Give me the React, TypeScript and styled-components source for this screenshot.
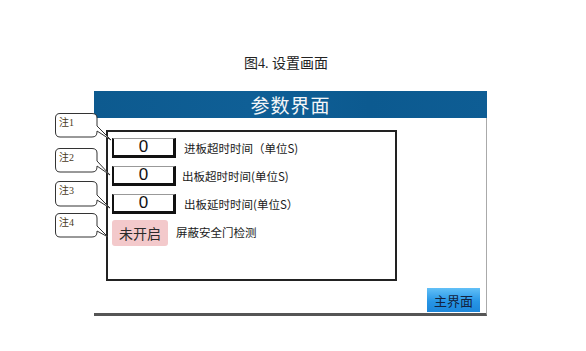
import React from 'react'
import styled, { createGlobalStyle } from 'styled-components'

const GlobalStyle = createGlobalStyle`
  html, body {
    margin: 0;
    padding: 0;
    background: #fff;
  }
  body {
    font-family: "Noto Sans CJK SC", "Noto Sans", sans-serif;
  }
`

const Page = styled.div`
  position: relative;
  width: 586px;
  height: 351px;
  overflow: hidden;
  display: flex;
  flex-direction: column;
`

const Caption = styled.div`
  margin-top: 55px;
  width: 572px;
  text-align: center;
  font-family: "Liberation Serif", "Noto Sans CJK SC", serif;
  font-size: 14px;
  line-height: 17px;
  color: #222;
`

const Screen = styled.div`
  margin: 19px 0 0 94px;
  width: 393px;
  display: flex;
  flex-direction: column;
`

const Header = styled.div`
  height: 27px;
  background: linear-gradient(90deg, #0d5a8f 0%, #0f5f96 40%, #0c5a90 70%, #0e5d94 100%);
  color: #f4f6f8;
  display: flex;
  align-items: center;
  justify-content: center;
  font-size: 19px;
  letter-spacing: 1px;
`

const Body = styled.div`
  height: 195px;
  border-right: 1px solid #aaa;
  border-bottom: 3px solid #555;
  display: flex;
  flex-direction: column;
`

const Panel = styled.div`
  margin: 12px 0 0 12px;
  width: 283px;
  height: 142px;
  border: 2px solid #222;
  display: flex;
  flex-direction: column;
  gap: 7px;
  padding: 5px 0 0 4px;
  box-sizing: content-box;
`

const Row = styled.div`
  display: flex;
  align-items: center;
  gap: ${(p: { $gap: number }) => p.$gap}px;
  height: 21px;
`

const ValueBox = styled.div`
  width: 59px;
  height: 16px;
  border-top: 1px solid #999;
  border-left: 2px solid #111;
  border-right: 3px solid #111;
  border-bottom: 3px solid #111;
  display: flex;
  align-items: center;
  justify-content: center;
  font-family: "Liberation Sans", sans-serif;
  font-size: 17px;
  color: #111;
`

const Label = styled.span`
  font-size: 11.5px;
  color: #1a1a1a;
  white-space: nowrap;
`

const ToggleButton = styled.div`
  width: 56px;
  height: 26px;
  margin-top: 2px;
  background: #f3c9cb;
  border-radius: 3px;
  display: flex;
  align-items: center;
  justify-content: center;
  font-size: 14px;
  color: #2a2a2a;
`

const HomeButton = styled.div`
  margin: auto 6px 1px auto;
  width: 53px;
  height: 24px;
  background: linear-gradient(180deg, #62c0f7 0%, #2796e6 55%, #1c86da 100%);
  display: flex;
  align-items: center;
  justify-content: center;
  font-size: 13px;
  color: #13233f;
`

const CalloutWrap = styled.div<{ $top: number }>`
  position: absolute;
  left: 55px;
  top: ${(p) => p.$top}px;
  width: 43px;
  height: 25px;
`

const CalloutText = styled.span`
  position: absolute;
  left: 4px;
  top: 4px;
  font-family: "Liberation Serif", "Noto Sans CJK SC", serif;
  font-size: 10px;
  line-height: 12px;
  color: #4a3a22;
`

const CalloutSvg = styled.svg`
  position: absolute;
  left: 0;
  top: 0;
  overflow: visible;
`

function Callout({ top, label, tipX, tipY, h = 24 }: { top: number; label: string; tipX: number; tipY: number; h?: number }) {
  const w = 42
  const r = 5
  const d = `M${r} 0.5 H${w - r} Q${w} 0.5 ${w} ${r} V${h - 11} L${tipX} ${tipY} L${w} ${h - 6} V${h - r} Q${w} ${h} ${w - r} ${h} H${r} Q0.5 ${h} 0.5 ${h - r} V${r} Q0.5 0.5 ${r} 0.5 Z`
  return (
    <CalloutWrap $top={top}>
      <CalloutSvg width={60} height={32}>
        <path d={d} fill="#fff" stroke="#333" strokeWidth={1} />
      </CalloutSvg>
      <CalloutText>{label}</CalloutText>
    </CalloutWrap>
  )
}

const rows = [
  { label: '进板超时时间（单位S)', gap: 8 },
  { label: '出板超时时间(单位S)', gap: 6 },
  { label: '出板延时时间(单位S）', gap: 8 },
]

export default function App() {
  return (
    <Page>
      <GlobalStyle />
      <Caption>图4. 设置画面</Caption>
      <Screen>
        <Header>参数界面</Header>
        <Body>
          <Panel>
            {rows.map((r, i) => (
              <Row key={i} $gap={r.gap}>
                <ValueBox>0</ValueBox>
                <Label>{r.label}</Label>
              </Row>
            ))}
            <Row $gap={8}>
              <ToggleButton>未开启</ToggleButton>
              <Label>屏蔽安全门检测</Label>
            </Row>
          </Panel>
          <HomeButton>主界面</HomeButton>
        </Body>
      </Screen>
      <Callout top={113} label="注1" tipX={56} tipY={27} />
      <Callout top={148} label="注2" tipX={55} tipY={27} />
      <Callout top={181} label="注3" tipX={55} tipY={27} h={25} />
      <Callout top={213} label="注4" tipX={53} tipY={24} />
    </Page>
  )
}
